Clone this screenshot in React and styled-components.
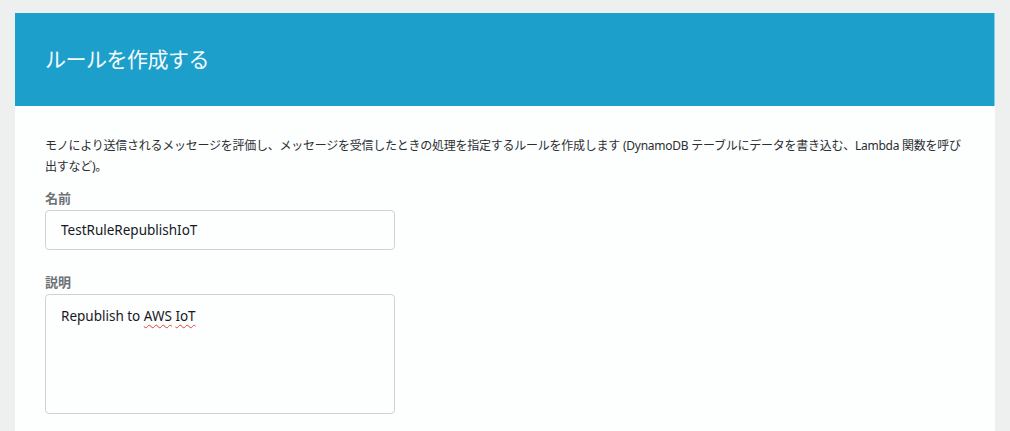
import React from 'react'
import styled, { createGlobalStyle } from 'styled-components'

const GlobalStyle = createGlobalStyle`
  html, body {
    margin: 0;
    padding: 0;
    background: #eef0f0;
    font-family: "Noto Sans", "Noto Sans CJK JP", sans-serif;
  }
`

function App() {
  return (
    <>
      <GlobalStyle />
      <Page>
        <Card>
          <Header>
            <Title>ルールを作成する</Title>
          </Header>
          <Body>
            <Description>
              モノにより送信されるメッセージを評価し、メッセージを受信したときの処理を指定するルールを作成します (DynamoDB テーブルにデータを書き込む、Lambda 関数を呼び出すなど)。
            </Description>
            <Field>
              <Label>名前</Label>
              <Input defaultValue="TestRuleRepublishIoT" spellCheck={false} />
            </Field>
            <Field>
              <Label>説明</Label>
              <TextArea role="textbox">
                Republish to <Misspelled>AWS</Misspelled> <Misspelled>IoT</Misspelled>
              </TextArea>
            </Field>
          </Body>
        </Card>
      </Page>
    </>
  )
}

const Page = styled.div`
  padding: 13px 15px 0;
  height: 431px;
  box-sizing: border-box;
  overflow: hidden;
`
const Card = styled.div`
  background: #fdfefe;
  height: 100%;
`
const Header = styled.div`
  background: #1d9fcb;
  height: 93px;
  box-sizing: border-box;
  display: flex;
  align-items: center;
  padding: 0 30px 3px;
  border-right: 1px solid #7fd0ec;
`
const Title = styled.h1`
  margin: 0;
  color: #f4fbfd;
  font-size: 21px;
  font-weight: 400;
  letter-spacing: -0.5px;
`
const Body = styled.div`
  padding: 29px 30px 0;
  display: flex;
  flex-direction: column;
  gap: 23px;
`
const Description = styled.p`
  margin: 0 0 -11px;
  font-size: 12px;
  letter-spacing: -0.25px;
  line-height: 21px;
  color: #2b2f33;
`
const Field = styled.div`
  display: flex;
  flex-direction: column;
  gap: 3px;
`
const Label = styled.label`
  font-size: 13px;
  font-weight: 700;
  color: #6d7276;
  line-height: 18px;
`
const Input = styled.input`
  width: 350px;
  height: 40px;
  box-sizing: border-box;
  border: 1px solid #cfd2d4;
  border-radius: 4px;
  padding: 0 15px;
  font-family: inherit;
  font-size: 13.5px;
  color: #16191f;
  background: #fdfefe;
  outline: none;
`
const TextArea = styled.div`
  width: 350px;
  height: 120px;
  box-sizing: border-box;
  border: 1px solid #cfd2d4;
  border-radius: 4px;
  padding: 11px 15px;
  font-size: 13.5px;
  line-height: 20px;
  color: #16191f;
  background: #fdfefe;
`
const Misspelled = styled.span`
  text-decoration: underline wavy #e0443e;
  text-decoration-thickness: 1px;
  text-underline-offset: 3px;
`

export default App
